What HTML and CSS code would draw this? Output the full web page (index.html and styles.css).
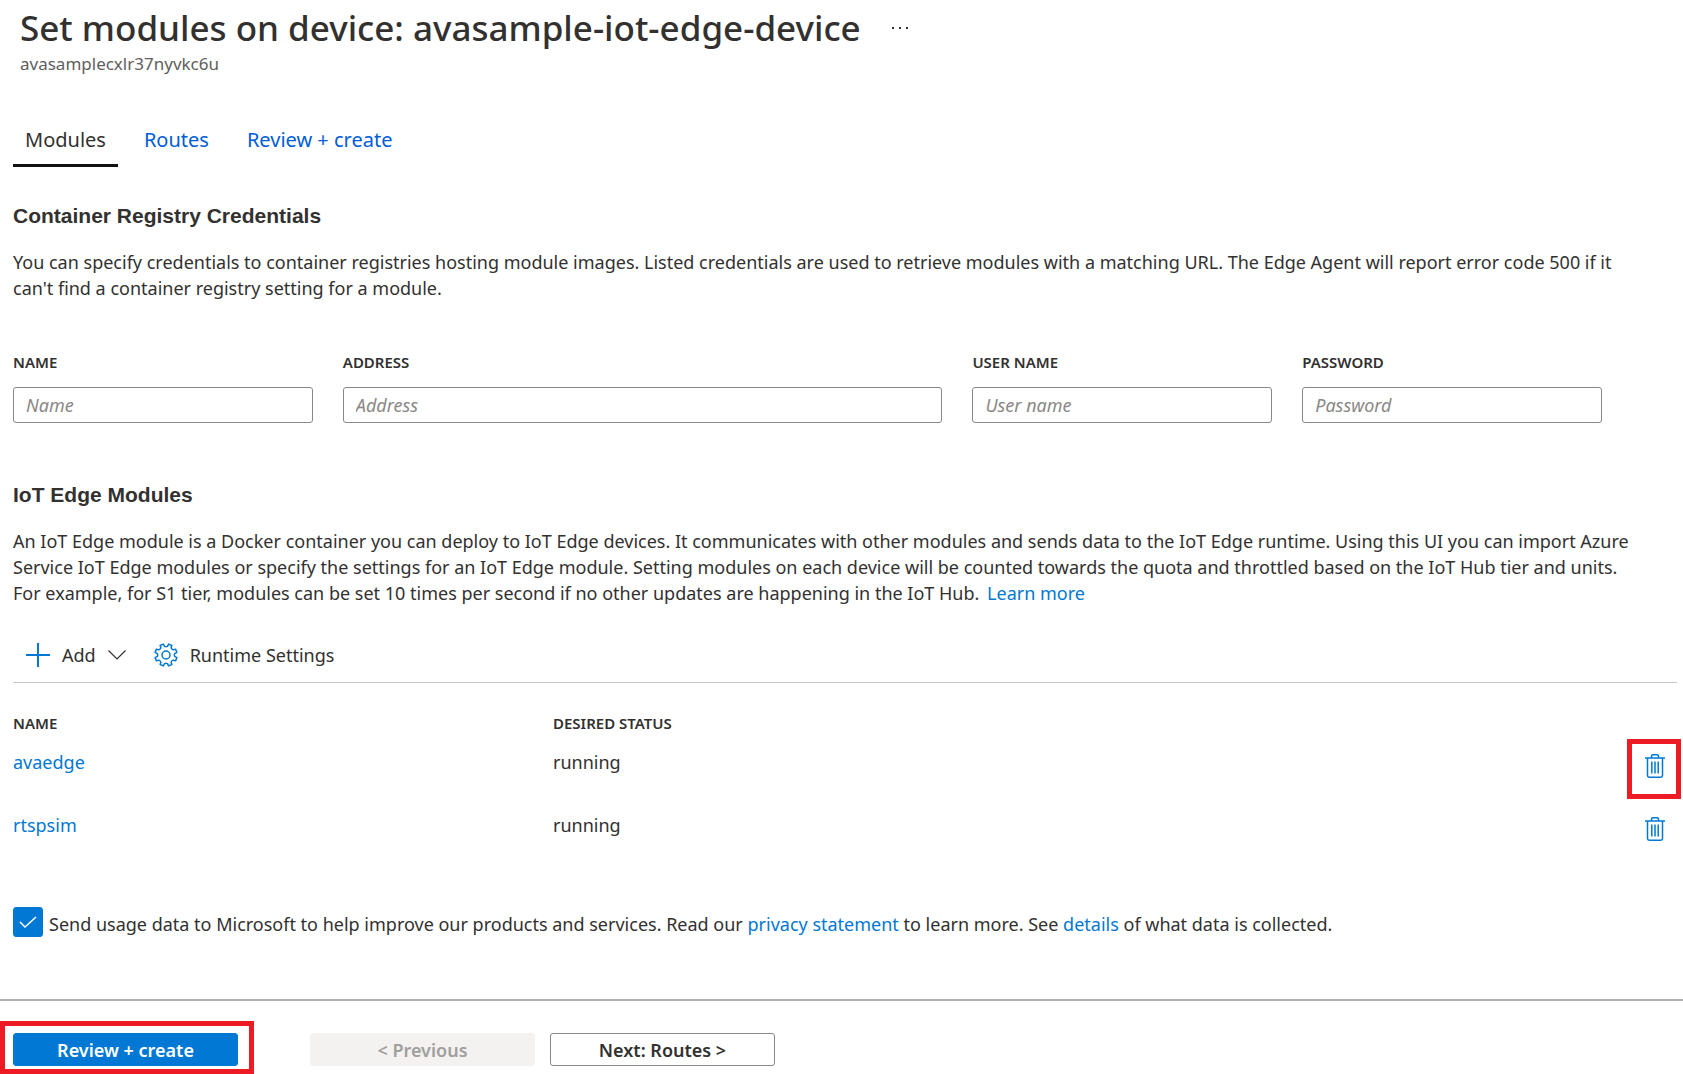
FILE: index.html
```html
<!DOCTYPE html>
<html lang="en">
<head>
<meta charset="utf-8">
<meta name="viewport" content="width=device-width, initial-scale=1">
<title>Set modules on device: avasample-iot-edge-device</title>
<link rel="stylesheet" href="styles.css">
</head>
<body>
<svg class="defs" aria-hidden="true">
  <symbol id="trash" viewBox="0 0 20 24">
    <g fill="none" stroke="currentColor" stroke-width="1.5">
      <path d="M0 4h20M6.5 4V2.2Q6.5.8 8 .8h4q1.500 0 1.500 1.400V4M2.500 4v17.500q0 1.700 1.700 1.700h11.600q1.700 0 1.700-1.700V4M6.800 7.500V19.500M10 7.500V19.500M13.200 7.500V19.500"/>
    </g>
  </symbol>
</svg>
<header class="page-header">
  <div class="title-row">
    <h1 class="title">Set modules on device: avasample-iot-edge-device</h1>
    <button class="more" type="button" aria-label="More options">
      <svg width="18" height="4" viewBox="0 0 18 4" fill="currentColor"><path d="M1 1h2v2H1zM8 1h2v2H8zM15 1h2v2h-2z"/></svg>
    </button>
  </div>
  <p class="subtitle">avasamplecxlr37nyvkc6u</p>
</header>
<nav class="tabs">
  <a class="tab tab-active" href="#modules">Modules</a>
  <a class="tab" href="#routes">Routes</a>
  <a class="tab" href="#review">Review + create</a>
</nav>
<main class="content">
  <section class="credentials">
    <h2 class="heading">Container Registry Credentials</h2>
    <p class="text">You can specify credentials to container registries hosting module images. Listed credentials are used to retrieve modules with a matching URL. The Edge Agent will report error code 500 if it can't find a container registry setting for a module.</p>
    <form class="fields">
      <div class="field"><label class="label" for="name">NAME</label><input class="input" id="name" type="text" placeholder="Name"></div>
      <div class="field"><label class="label" for="address">ADDRESS</label><input class="input" id="address" type="text" placeholder="Address"></div>
      <div class="field"><label class="label" for="user">USER NAME</label><input class="input" id="user" type="text" placeholder="User name"></div>
      <div class="field"><label class="label" for="password">PASSWORD</label><input class="input" id="password" type="password" placeholder="Password"></div>
    </form>
  </section>
  <section class="modules">
    <h2 class="heading">IoT Edge Modules</h2>
    <p class="text">An IoT Edge module is a Docker container you can deploy to IoT Edge devices. It communicates with other modules and sends data to the IoT Edge runtime. Using this UI you can import Azure Service IoT Edge modules or specify the settings for an IoT Edge module. Setting modules on each device will be counted towards the quota and throttled based on the IoT Hub tier and units. For example, for S1 tier, modules can be set 10 times per second if no other updates are happening in the IoT Hub. <a class="link learn-more" href="#learn">Learn more</a></p>
    <div class="toolbar">
      <button class="tool" type="button">
        <svg class="tool-icon" width="24" height="24" viewBox="0 0 24 24" fill="none" stroke="currentColor" stroke-width="2"><path d="M12 0v24M0 12h24"/></svg>
        <span>Add</span>
        <svg class="chevron" width="18" height="10" viewBox="0 0 18 10" fill="none" stroke="currentColor" stroke-width="1.2"><path d="M.5.5 9 9 17.500.5"/></svg>
      </button>
      <button class="tool" type="button">
        <svg class="tool-icon" width="24" height="24" viewBox="-12 -12 24 24" fill="none" stroke="currentColor" stroke-width="1.5" stroke-linejoin="round"><path d="M-1.450-8.680Q0-7.900 1.450-8.680L2.610-10.890 5.850-9.550 5.110-7.160Q5.600-5.600 7.160-5.110L9.550-5.850 10.890-2.610 8.680-1.450Q7.900 0 8.680 1.450L10.890 2.610 9.550 5.850 7.160 5.110Q5.600 5.600 5.110 7.160L5.850 9.550 2.610 10.890 1.450 8.680Q0 7.900-1.450 8.680L-2.610 10.890-5.850 9.550-5.110 7.160Q-5.600 5.600-7.160 5.110L-9.550 5.850-10.890 2.610-8.680 1.450Q-7.900 0-8.680-1.450L-10.890-2.610-9.550-5.850-7.160-5.110Q-5.600-5.600-5.110-7.160L-5.850-9.550-2.610-10.890Z"/><circle r="4"/></svg>
        <span>Runtime Settings</span>
      </button>
    </div>
    <table class="table">
      <thead>
        <tr><th class="col-name" scope="col">NAME</th><th scope="col">DESIRED STATUS</th><th class="col-action" aria-label="Actions"></th></tr>
      </thead>
      <tbody>
        <tr><td><a class="link" href="#avaedge">avaedge</a></td><td>running</td><td class="action"><button class="delete marked" type="button" aria-label="Delete avaedge"><svg width="20" height="24"><use href="#trash"/></svg></button></td></tr>
        <tr><td><a class="link" href="#rtspsim">rtspsim</a></td><td>running</td><td class="action"><button class="delete" type="button" aria-label="Delete rtspsim"><svg width="20" height="24"><use href="#trash"/></svg></button></td></tr>
      </tbody>
    </table>
  </section>
  <div class="consent">
    <input class="check" id="usage" type="checkbox" checked>
    <label for="usage">Send usage data to Microsoft to help improve our products and services. Read our <a class="link" href="#privacy">privacy statement</a> to learn more. See <a class="link" href="#details">details</a> of what data is collected.</label>
  </div>
</main>
<footer class="footer">
  <button class="button button-primary marked" type="button">Review + create</button>
  <button class="button button-disabled" type="button" disabled>&lt; Previous</button>
  <button class="button" type="button">Next: Routes &gt;</button>
</footer>
</body>
</html>
```
FILE: styles.css
```css
* { box-sizing: border-box; }

body {
  margin: 0;
  background: #fff;
  color: #323130;
  font-family: "Segoe UI", "Noto Sans", "Open Sans", sans-serif;
  font-size: 18px;
  line-height: 26px;
}

h1, h2, p { margin: 0; }
button { padding: 0; border: 0; background: none; color: inherit; font: inherit; }
.defs { display: none; }
.link { color: #0078d4; text-decoration: none; }

.page-header { padding: 4px 20px 0; }
.title-row { display: flex; align-items: center; gap: 30px; }
.title { font-size: 35px; line-height: 48px; font-weight: 500; }
.more { display: flex; }
.subtitle { color: #605e5c; font-size: 17px; line-height: 24px; }

.tabs { display: flex; gap: 14px; padding: 51px 13px 0; font-size: 20px; }
.tab { padding: 0 12px 11px; border-bottom: 3px solid transparent; color: #015cda; text-decoration: none; }
.tab-active { border-color: #111; color: #323130; }

.content { padding: 36px 6px 62px 13px; }
.heading { margin-bottom: 20px; font-family: "Liberation Sans", Arial, sans-serif; font-size: 21px; line-height: 26px; }
.text { padding-right: 35px; }
.heading + .text { margin-bottom: 48px; }
.learn-more { margin-left: 3px; }

.fields { display: grid; grid-template-columns: 1fr 2fr 1fr 1fr; gap: 30px; padding-right: 75px; }
.field { display: flex; flex-direction: column; gap: 12px; min-width: 0; }
.label { font-size: 15px; font-weight: 600; }
.input { width: 100%; height: 36px; padding: 0 12px; border: 1px solid #8a8886; border-radius: 3px; font: inherit; }
.input::placeholder { color: #8a8886; font-style: italic; opacity: 1; }

.modules { margin-top: 59px; }
.modules .heading + .text { margin-bottom: 36px; }
.toolbar { display: flex; gap: 28px; padding: 0 13px 14px; border-bottom: 1px solid #c8c6c4; }
.tool { display: flex; align-items: center; gap: 12px; }
.tool-icon { color: #0078d4; }

.table { width: 100%; margin-top: 27px; border-collapse: collapse; table-layout: fixed; }
.table th { padding: 0; font-size: 15px; font-weight: 600; text-align: left; }
.table td { height: 63px; padding: 13px 0 0; vertical-align: top; }
.col-name { width: 540px; }
.col-action { width: 54px; }
.table .action { padding: 3px 0 0; }
.delete { display: flex; align-items: center; justify-content: center; width: 100%; height: 60px; padding: 0 0 6px 10px; color: #0078d4; }

.marked { position: relative; }
.marked::after { content: ""; position: absolute; border: 5px solid #ed1c24; pointer-events: none; }
.delete.marked::after { inset: 0 -4px 0 4px; }

.consent { display: flex; align-items: flex-end; gap: 6px; margin-top: 45px; }
.check { appearance: none; flex: none; width: 30px; height: 30px; margin: 0; border-radius: 3px; background: #fff; border: 1px solid #8a8886; }
.check:checked { border-color: #0078d4; background: #0078d4 url("data:image/svg+xml,%3Csvg xmlns='http://www.w3.org/2000/svg' viewBox='0 0 18 12'%3E%3Cpath d='M1 6l5 5L17 1' fill='none' stroke='white' stroke-width='1.5'/%3E%3C/svg%3E") center / 18px 12px no-repeat; }

.footer { display: flex; gap: 15px; padding: 32px 13px 8px; border-top: 2px solid #b3b0ad; }
.button { width: 225px; height: 33px; border: 1px solid #8a8886; border-radius: 3px; font-weight: 600; }
.button-primary { margin-right: 57px; border-color: #0078d4; background: #0078d4; color: #fff; }
.button-primary.marked::after { inset: -13px -17px -9px -14px; }
.button-disabled { border-color: #f3f2f1; background: #f3f2f1; color: #a19f9d; }
```
